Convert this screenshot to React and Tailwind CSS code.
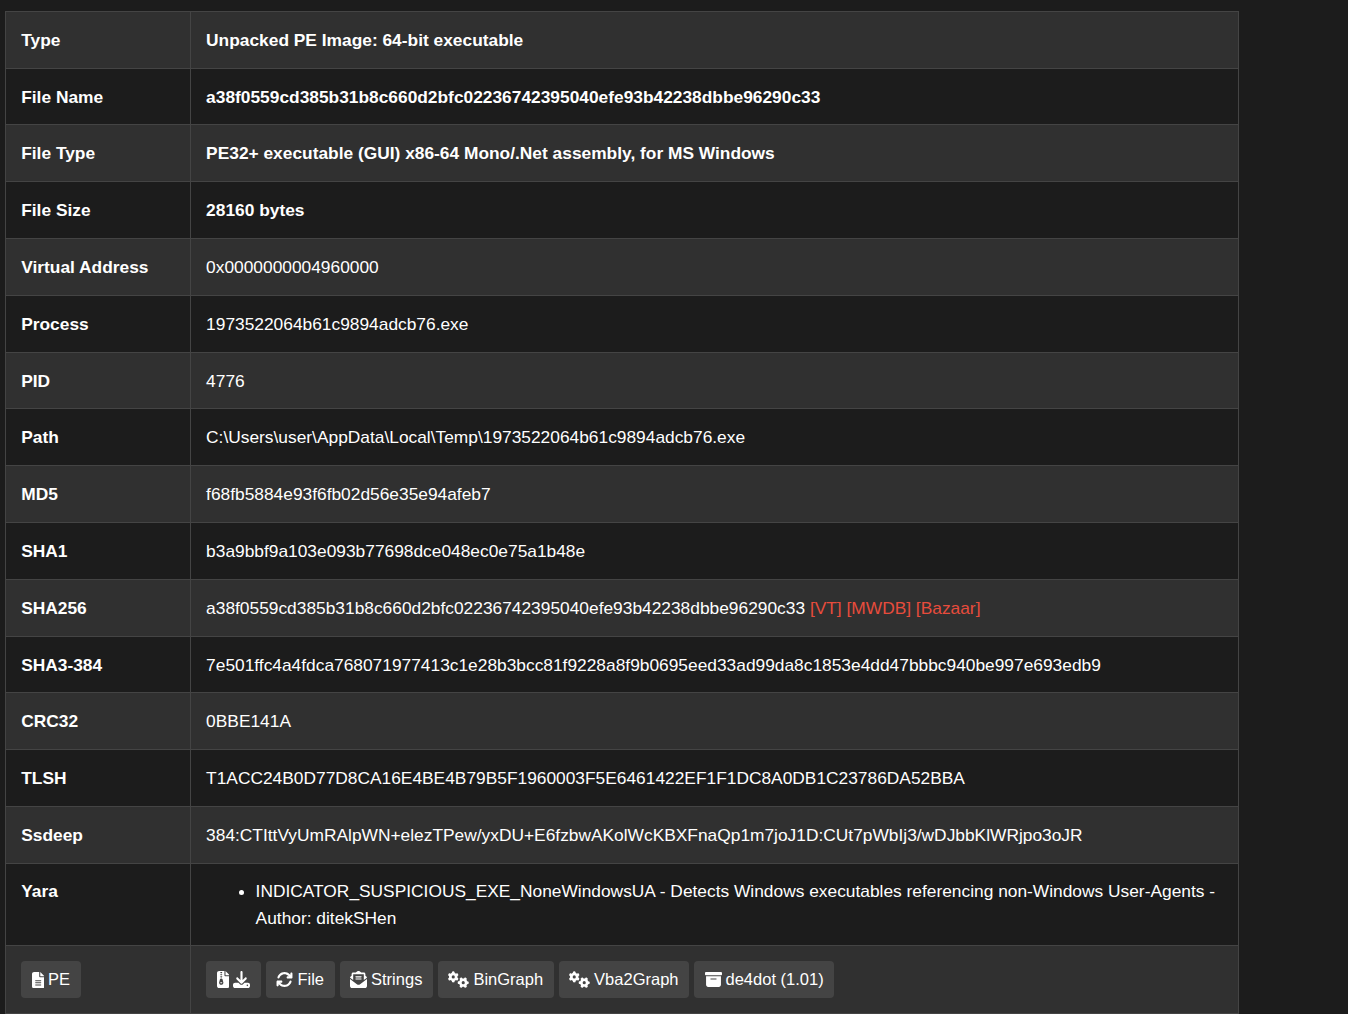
import React from "react";
import { FaFileLines, FaFileZipper, FaDownload, FaArrowsRotate, FaEnvelopeOpenText, FaGears, FaBoxArchive } from "react-icons/fa6";

const Btn = ({ children }) => (
  <span className="inline-flex h-[37px] items-center gap-[4px] rounded-[4px] bg-[#444444] px-[10.5px] pt-[1px] text-[16.5px] text-white">{children}</span>
);

const rows = [
  ["Type", <b>Unpacked PE Image: 64-bit executable</b>],
  ["File Name", <b>a38f0559cd385b31b8c660d2bfc02236742395040efe93b42238dbbe96290c33</b>],
  ["File Type", <b>PE32+ executable (GUI) x86-64 Mono/.Net assembly, for MS Windows</b>],
  ["File Size", <b>28160 bytes</b>],
  ["Virtual Address", "0x0000000004960000"],
  ["Process", "1973522064b61c9894adcb76.exe"],
  ["PID", "4776"],
  ["Path", "C:\\Users\\user\\AppData\\Local\\Temp\\1973522064b61c9894adcb76.exe"],
  ["MD5", "f68fb5884e93f6fb02d56e35e94afeb7"],
  ["SHA1", "b3a9bbf9a103e093b77698dce048ec0e75a1b48e"],
  ["SHA256", <>a38f0559cd385b31b8c660d2bfc02236742395040efe93b42238dbbe96290c33 <span className="text-[#e74c3c]">[VT] [MWDB] [Bazaar]</span></>],
  ["SHA3-384", "7e501ffc4a4fdca768071977413c1e28b3bcc81f9228a8f9b0695eed33ad99da8c1853e4dd47bbbc940be997e693edb9"],
  ["CRC32", "0BBE141A"],
  ["TLSH", "T1ACC24B0D77D8CA16E4BE4B79B5F1960003F5E6461422EF1F1DC8A0DB1C23786DA52BBA"],
  ["Ssdeep", "384:CTIttVyUmRAlpWN+elezTPew/yxDU+E6fzbwAKolWcKBXFnaQp1m7joJ1D:CUt7pWbIj3/wDJbbKlWRjpo3oJR"],
];

export default function App() {
  return (
    <div className="min-h-[1014px] bg-[#1c1c1c] pl-[5px] pt-[10.8px] font-['Liberation_Sans',Arial,sans-serif] text-[17.35px] text-white">
      <table className="w-[1234px] table-fixed border-collapse">
        <colgroup><col className="w-[185px]" /><col /></colgroup>
        <tbody>
          {rows.map(([k, v], i) => (
            <tr key={k} className={`h-[56.8px] ${i % 2 === 0 ? "bg-[#303030]" : "bg-[#1c1c1c]"}`}>
              <th className="border border-[#444444] px-[15.2px] pt-[0.1px] text-left font-bold">{k}</th>
              <td className="border border-[#444444] px-[15.1px] pt-[0.1px]">{v}</td>
            </tr>
          ))}
          <tr className="h-[82px] bg-[#1c1c1c]">
            <th className="border border-[#444444] px-[15.2px] pt-[14px] text-left align-top font-bold">Yara</th>
            <td className="border border-[#444444] pb-[13px] pt-[14px] pl-[15.1px] pr-[15.2px] align-top">
              <ul className="list-disc pl-[49.5px] leading-[27px]">
                <li>INDICATOR_SUSPICIOUS_EXE_NoneWindowsUA - Detects Windows executables referencing non-Windows User-Agents - Author: ditekSHen</li>
              </ul>
            </td>
          </tr>
          <tr className="h-[68px] bg-[#303030]">
            <th className="border border-[#444444] px-[15.2px] text-left font-normal"><Btn><FaFileLines className="h-[16.5px] w-[12.4px]" />PE</Btn></th>
            <td className="border border-[#444444] px-[15.2px]">
              <div className="flex gap-[5px]">
                <Btn><FaFileZipper className="h-[17px] w-[12.75px]" /><FaDownload size={17} /></Btn>
                <Btn><FaArrowsRotate size={17} />File</Btn>
                <Btn><FaEnvelopeOpenText size={17} />Strings</Btn>
                <Btn><FaGears size={21} />BinGraph</Btn>
                <Btn><FaGears size={21} />Vba2Graph</Btn>
                <Btn><FaBoxArchive size={17} />de4dot (1.01)</Btn>
              </div>
            </td>
          </tr>
        </tbody>
      </table>
    </div>
  );
}
